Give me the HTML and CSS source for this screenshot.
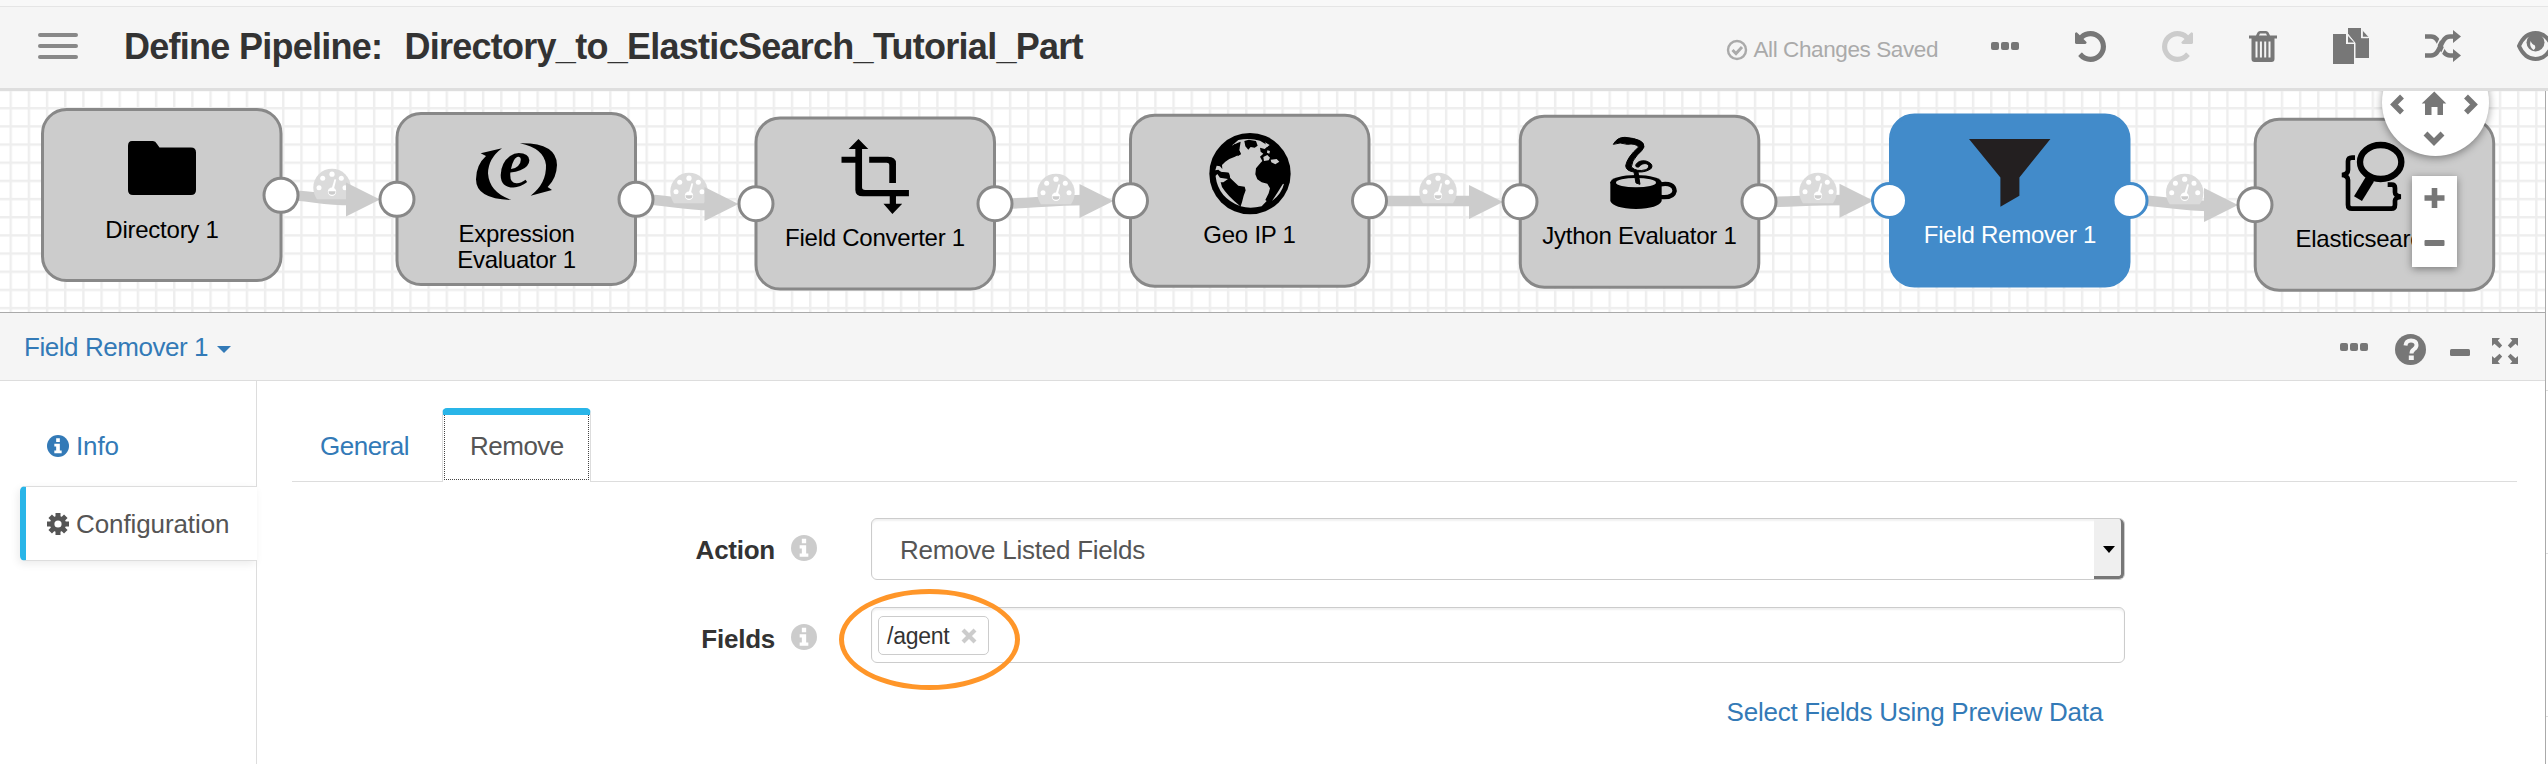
FILE: index.html
```html
<!DOCTYPE html>
<html lang="en">
<head>
<meta charset="utf-8">
<title>Define Pipeline</title>
<link rel="stylesheet" href="styles.css">
</head>
<body>
<svg class="sprite" aria-hidden="true">
  <defs>
    <symbol id="undo" viewBox="128 128 1536 1536"><path d="M1664 896q0 156-61 298t-164 245-245 164-298 61q-172 0-327-72.500t-264-204.500q-7-10-6.500-22.500t8.500-20.500l137-138q10-9 25-9 16 2 23 12 73 95 179 147t225 52q104 0 198.500-40.500t163.500-109.500 109.500-163.500 40.500-198.500-40.500-198.500-109.500-163.500-163.500-109.500-198.500-40.500q-98 0-188 35.500t-160 101.500l137 138q31 30 14 69-17 40-59 40h-448q-26 0-45-19t-19-45v-448q0-42 40-59 39-17 69 14l130 129q107-101 244.500-156.500t284.500-55.500q156 0 298 61t245 164 164 245 61 298z"/></symbol>
    <symbol id="info" viewBox="0 0 24 24"><circle cx="12" cy="12" r="12"/><path class="cut" d="M10 3.500h4v4h-4zM8 9.500h6v7.500h2v3H8v-3h2v-4.500H8z"/></symbol>
    <symbol id="dots" viewBox="0 0 28 8"><rect width="8" height="8" rx="2"/><rect x="10" width="8" height="8" rx="2"/><rect x="20" width="8" height="8" rx="2"/></symbol>
  </defs>
</svg>

<div class="strip"></div>
<header class="topbar">
  <div class="menu"><span></span><span></span><span></span></div>
  <h1 class="title"><span>Define Pipeline:</span><span class="name">Directory_to_ElasticSearch_Tutorial_Part</span></h1>
  <div class="saved">
    <svg width="22" height="22" viewBox="0 0 22 22" fill="none" stroke="#aaa" stroke-width="2.400"><circle cx="11" cy="11" r="9"/><path d="M6.500 11l3.500 3.500 6-6.500" stroke-width="3"/></svg>
    <span>All Changes Saved</span>
  </div>
  <nav class="tools">
    <svg width="28" height="8"><use href="#dots"/></svg>
    <svg width="31" height="31"><use href="#undo"/></svg>
    <svg class="off" width="31" height="31"><use href="#undo"/></svg>
    <svg width="28" height="31" viewBox="0 0 28 31"><path fill-rule="evenodd" d="M0 4.500h7l1.500-3Q9.300 0 11 0h6q1.700 0 2.500 1.500l1.500 3h7v3h-2.500V28q0 3-3 3h-17q-3 0-3-3V7.500H0zM10 4.500h8l-1-2h-6zM6.500 10.500v16h2v-16zM10.900 10.500v16h2v-16zM15.200 10.500v16h2v-16zM19.500 10.500v16h2v-16z"/></svg>
    <svg width="36" height="36" viewBox="0 0 36 36"><path d="M15 0h13v10h8v20H22V16L15 8.500z"/><path d="M29.500 2.500L35.500 9h-6z"/><path class="bg" d="M0 5h14l8 10v21H0z" stroke="#f5f5f5"/><path d="M0 6h13v10h8v20H0z"/><path d="M15 8l6 6.500h-6z"/><path d="M29 3v6.500h6.500" fill="none" stroke="#f5f5f5" stroke-width="1.500"/></svg>
    <svg width="36" height="32" viewBox="0 0 36 32"><path d="M0 6.500h6c5 0 7 4 9.500 9.500S20 25.500 25 25.500h4M0 25.500h6c5 0 7-4 9.500-9.500S20 6.500 25 6.500h4" fill="none" stroke="#777" stroke-width="4.600"/><path d="M28 0l8 6.500-8 6.500zM28 19l8 6.500-8 6.500z"/><path d="M11 17l4-8M16.500 23.500l4-8" stroke="#f5f5f5" stroke-width="1.500" fill="none"/></svg>
    <svg width="37" height="30" viewBox="0 0 37 30"><path d="M2 15C6 6 12 2 18.500 2S31 6 35 15C31 24 25 28 18.500 28S6 24 2 15z" fill="none" stroke="#777" stroke-width="4"/><circle cx="18.500" cy="11.500" r="9"/><path d="M13.500 10q-1.500 6 3 9 3-2 1-5-2 0-4-4z" fill="#f5f5f5"/></svg>
  </nav>
</header>

<section class="canvas">
<svg class="diagram" width="2545" height="221" viewBox="0 91 2545 221">
  <defs>
    <pattern id="grid" x="9.500" y="107" width="18.170" height="18.170" patternUnits="userSpaceOnUse"><path d="M0 1.200H18.200M1.200 0V18.200" stroke="#eee" stroke-width="2.400"/></pattern>
    <g id="box"><rect x="1.500" y="1.500" width="238.500" height="171" rx="24"/></g>
    <g id="gauge"><path d="M-15 30.500Q-18.700 25-18.700 18.700A18.700 18.700 0 0 1 18.700 18.700Q18.700 25 15 30.500z" fill="#dbdbdb"/><g fill="#fff"><circle cx="-13" cy="19" r="2.500"/><circle cx="13" cy="19" r="2.500"/><circle cx="-9.300" cy="9.500" r="2.500"/><circle cx="9.300" cy="9.500" r="2.500"/><circle cy="5.500" r="2.600"/><circle cy="23" r="4.200"/><path d="M2.500 10.500l1.700.4L1.500 22h-2.500z"/></g><path d="M-3.500 22.500h7a3.500 3.500 0 0 1-7 0z" fill="#ccc"/></g>
    <path id="head" d="M-34-17L0 0-34 17z" fill="#ccc"/>
  </defs>
  <rect y="91" width="2545" height="221" fill="url(#grid)"/>

  <g class="edges">
    <path d="M281 195C310 195 320 200 350 200"/>
    <path d="M636 199C665 199 680 205 710 205"/>
    <path d="M995 204C1025 204 1050 200 1085 200"/>
    <path d="M1369 201H1475"/>
    <path d="M1759 202C1790 202 1810 200 1845 200"/>
    <path d="M2130 200C2160 200 2180 206 2210 206"/>
  </g>
  <use href="#gauge" x="332" y="168.700"/><use href="#head" x="380" y="199.500"/>
  <use href="#gauge" x="689" y="172.700"/><use href="#head" x="738.500" y="204"/>
  <use href="#gauge" x="1056" y="173.700"/><use href="#head" x="1113.500" y="201"/>
  <use href="#gauge" x="1438" y="172.700"/><use href="#head" x="1503" y="202"/>
  <use href="#gauge" x="1818" y="172.700"/><use href="#head" x="1873.500" y="200.800"/>
  <use href="#gauge" x="2184.700" y="173.700"/><use href="#head" x="2238" y="205"/>

  <g class="boxes">
    <use href="#box" x="41" y="108"/><use href="#box" x="395.500" y="112"/><use href="#box" x="754.500" y="116.500"/>
    <use href="#box" x="1129" y="113.700"/><use href="#box" x="1518.800" y="114.700"/><use href="#box" x="2253.700" y="117.700"/>
    <use class="picked" href="#box" x="1889" y="113.500"/>
  </g>
  <g class="ports">
    <circle cx="281" cy="195.300" r="17"/><circle cx="397" cy="199.300" r="17"/><circle cx="636" cy="199.300" r="17"/>
    <circle cx="756" cy="203.700" r="17"/><circle cx="995" cy="203.700" r="17"/><circle cx="1130.500" cy="200.800" r="17"/>
    <circle cx="1369.500" cy="200.800" r="17"/><circle cx="1520" cy="201.700" r="17"/><circle cx="1759" cy="201.700" r="17"/>
    <circle cx="2255" cy="204.700" r="17"/>
    <circle class="picked" cx="1889.500" cy="200.500" r="17"/><circle class="picked" cx="2130" cy="200.500" r="17"/>
  </g>

  <path d="M132 141h21q2.500 0 4 3l2.500 3.500H191q5 0 5 5V190q0 5-5 5h-58q-5 0-5-5v-44q0-5 4-5z"/>

  <g transform="translate(460 130) scale(.3333)">
    <path d="M62 70L126 55Q85 85 84 130Q88 188 155 210Q48 208 48 148Q48 105 78 78z"/>
    <path d="M180 40Q290 38 291 105Q290 145 263 171L276 180 212 197Q260 160 258 105Q252 55 180 40z"/>
    <text class="logo-e" x="117" y="170">e</text>
  </g>

  <g transform="translate(700 80) scale(.4464 .3333)"><path d="M355 177L377 207H363V322Q363 330 370 330H468V349H365Q348 349 348 330V207H333zM317 230h31v18h-31zM379 230H421Q439 230 439 250V309H424V254Q424 248 418 248H379zM425 349H439V371H453L431 402 411 371H425z"/></g>

  <g transform="translate(1200 125) scale(.3333)">
    <circle cx="150" cy="146" r="122"/>
    <path fill="#ccc" d="M95 62L112 54 122 50 118 75 122 86 105 95 88 102 76 110 66 120 67 132 60 124 50 122 46 136 55 134 64 142 86 143 90 158 100 168 115 182 134 185 137 196 131 212 126 232 122 244Q150 252 185 244L200 228 196 225 206 205 210 190 202 176 185 172 172 163 166 148 168 130 182 113 187 108 180 95 190 86 182 80 180 68 194 72 205 62 180 47Q150 38 115 45z"/>
    <path d="M133 48L146 44 168 48 173 62 164 68 152 66 145 74 136 64zM104 56l10 4 4 12-12 5-8-8zM110 80l9-2 4 10-10 6z"/>
    <path fill="#ccc" d="M190 96l12-6 8 8-4 8-14 2zM212 104l18-2 8 8-12 8-12-6zM202 76l8 2-2 8-7-3zM47 152L52 147 60 158 84 162 70 172 62 172 66 186Q82 212 120 243Q55 218 47 155zM252 176Q246 205 216 228 235 200 248 178zM195 52l14 8-8 6z"/>
    <path d="M56 141l30 4 3 13-22-2z" fill="none" stroke="#000" stroke-width="3"/>
  </g>

  <g transform="translate(1590 125) scale(.3333)">
    <ellipse cx="138" cy="172" rx="77" ry="22"/>
    <path d="M61 172V228Q70 250 138 252Q206 250 215 228V172z"/>
    <ellipse cx="138" cy="173" rx="60" ry="14" fill="#ccc"/>
    <path d="M212 178Q252 172 254 198Q250 220 212 216" fill="none" stroke="#000" stroke-width="13"/>
    <path stroke="#000" stroke-width="3" d="M70 58Q82 36 105 37Q165 42 162 66Q158 76 142 90Q125 108 124 126Q140 142 168 134Q182 126 172 117Q158 112 146 126Q136 128 137 120Q146 104 168 108Q192 116 184 130Q170 142 144 141L150 178 138 174 132 141Q108 138 107 122Q112 96 146 66Q136 54 112 58Q90 50 70 58z"/>
  </g>

  <path d="M1969 139h81.400l-31 38.500v18.200l-19 11v-29.200z" fill="#231f20"/>

  <g transform="translate(2330 85) scale(.3333)" fill="none" stroke="#000">
    <path d="M75 218H66Q54 218 54 229V255Q54 268 36 270Q54 272 54 285V359Q54 371 66 371H184Q195 371 195 359V347Q196 338 212 335Q195 332 195 322V309Q195 299 185 299H173" stroke-width="14"/>
    <ellipse cx="152" cy="231" rx="62" ry="51" stroke-width="19"/>
    <path d="M120 282L84 341" stroke-width="28"/>
  </g>

  <g class="labels">
    <text x="162" y="237.700">Directory 1</text>
    <text x="516.500" y="242">Expression</text><text x="516.500" y="267.700">Evaluator 1</text>
    <text x="875" y="246">Field Converter 1</text>
    <text x="1249.500" y="243">Geo IP 1</text>
    <text x="1639.500" y="244.300">Jython Evaluator 1</text>
    <text class="on" x="2010" y="243">Field Remover 1</text>
    <text x="2375" y="247.300">Elasticsearch 1</text>
  </g>
</svg>
<div class="pan">
  <svg width="107" height="66" viewBox="2382 91 107 66"><g fill="none" stroke="#777" stroke-width="5.500"><path d="M2402 96.500l-8 8 8 8M2466 96.500l8 8-8 8M2425.500 133.500l8.500 8.500 8.500-8.500"/></g><path d="M2434.300 91.500l12 12h-3.300V115h-5.500v-8h-6v8h-6.500v-11.500h-3.300z"/></svg>
</div>
<div class="zoom">
  <svg width="45" height="91"><path d="M19.700 12h5.600v7.200h7.200v5.600h-7.200V32h-5.600v-7.200h-7.200v-5.600h7.200z"/><rect x="12.500" y="64" width="20" height="6" rx="1"/></svg>
</div>
</section>

<section class="panel">
  <div class="panel-head">
    <div class="picker">Field Remover 1<i class="caret"></i></div>
    <div class="actions">
      <svg width="28" height="8"><use href="#dots"/></svg>
      <svg class="q" width="31" height="31" viewBox="0 0 31 31"><circle cx="15.500" cy="15.500" r="15.500"/><path d="M10.500 11.500q.5-5 5.500-5 5.500 0 5.500 4.500 0 2.500-2.500 4.200-2.500 1.600-2.500 4.300" fill="none" stroke="#f5f5f5" stroke-width="4"/><path d="M13.800 21.500h5v4.500h-5z" fill="#f5f5f5"/></svg>
      <svg class="m" width="20" height="7"><rect width="20" height="7" rx="1.500"/></svg>
      <svg class="x" width="26" height="26" viewBox="0 0 26 26"><path d="M0 0h8L5.800 2.500l4.400 5-2.700 2.700-5-4.400L0 8zM26 0v8l-2.500-2.200-5 4.400-2.700-2.700 4.400-5L18 0zM0 26v-8l2.500 2.200 5-4.400 2.700 2.700-4.400 5L8 26zM26 26h-8l2.200-2.500-4.400-5 2.700-2.700 5 4.400L26 18z"/></svg>
    </div>
  </div>
  <div class="panel-body">
    <aside class="side">
      <div class="side-item link"><svg width="22" height="22"><use href="#info"/></svg>Info</div>
      <div class="side-item current"><svg width="22" height="22" viewBox="0 0 22 22"><g stroke="#555" stroke-width="5"><path d="M11 0v22M0 11h22M3.200 3.200l15.600 15.600M18.800 3.200L3.200 18.800"/></g><circle cx="11" cy="11" r="8"/><circle cx="11" cy="11" r="3.600" fill="#fff"/></svg>Configuration</div>
      <div class="side-rest"></div>
    </aside>
    <main class="content">
      <div class="tabs"><div class="tab first link">General</div><div class="tab active"><span>Remove</span></div></div>
      <div class="form">
        <div class="label">Action</div><svg class="hint" width="26" height="26"><use href="#info"/></svg>
        <div class="field select"><span>Remove Listed Fields</span><div class="drop"><i></i></div></div>
        <div class="label">Fields</div><svg class="hint" width="26" height="26"><use href="#info"/></svg>
        <div class="field tags">
          <div class="tag">/agent<svg width="16" height="16" viewBox="0 0 16 16"><path d="M2 2l12 12M14 2L2 14" stroke="#ccc" stroke-width="4.200"/></svg></div>
          <div class="ring"></div>
        </div>
        <div class="preview link">Select Fields Using Preview Data</div>
      </div>
    </main>
  </div>
</section>
<div class="edge"><i></i><i></i><i></i></div>
</body>
</html>
```
FILE: styles.css
```css
* { box-sizing: border-box; }
body {
  margin: 0;
  width: 2548px;
  height: 764px;
  overflow: hidden;
  position: relative;
  display: flex;
  flex-direction: column;
  background: #fff;
  color: #333;
  font: 26px/36px "Liberation Sans", Arial, sans-serif;
  letter-spacing: -.25px;
}
svg { display: block; flex: none; }
.sprite { position: absolute; width: 0; height: 0; }
.link { color: #337ab7; }

.strip { height: 7px; background: #f8f8f8; border-bottom: 1px solid #e5e5e5; }
.topbar {
  height: 84px;
  display: flex;
  align-items: center;
  padding: 0 0 0 38px;
  background: #f5f5f5;
  border-bottom: 3px solid #dedede;
  overflow: hidden;
}
.menu { display: flex; flex-direction: column; gap: 7px; width: 40px; padding-bottom: 3px; }
.menu span { height: 4px; border-radius: 2px; background: #888; }
.title {
  display: flex;
  gap: 22px;
  margin: 0 0 0 46px;
  padding-bottom: 2px;
  font-size: 36px;
  line-height: 44px;
  white-space: nowrap;
  letter-spacing: -.73px;
}
.saved {
  display: flex;
  align-items: center;
  gap: 5px;
  margin-left: auto;
  padding-top: 4px;
  font-size: 22.500px;
  color: #aaa;
  white-space: nowrap;
  letter-spacing: -.4px;
}
.tools { display: flex; align-items: center; gap: 56px; margin: 0 -6px 3px 53px; fill: #777; }
.tools .off { fill: #ccc; transform: scaleX(-1); }
.tools .bg { fill: #f5f5f5; }

.canvas { position: relative; height: 222px; border-bottom: 1px solid #aaa; overflow: hidden; flex: none; }
.edges path { fill: none; stroke: #ccc; stroke-width: 10.500; }
.boxes { fill: #ccc; stroke: #888; stroke-width: 3; }
.boxes .picked { fill: #428bca; stroke: #428bca; }
.ports { fill: #fff; stroke: #888; stroke-width: 3; }
.ports .picked { stroke: #428bca; }
.labels { font-size: 24px; text-anchor: middle; fill: #000; }
.labels .on { fill: #fff; }
.logo-e { font: italic bold 216px "Liberation Serif", serif; letter-spacing: 0; }
.pan {
  position: absolute;
  left: 2382px;
  top: -42px;
  width: 107px;
  height: 107px;
  padding-top: 42px;
  border-radius: 50%;
  background: #fff;
  box-shadow: 0 2px 8px rgba(0, 0, 0, .4);
  fill: #777;
}
.zoom { position: absolute; left: 2412px; top: 85px; width: 45px; height: 91px; background: #fff; box-shadow: 0 2px 8px rgba(0, 0, 0, .4); fill: #777; }

.panel { flex: 1; display: flex; flex-direction: column; width: 2545px; }
.panel-head {
  height: 68px;
  display: flex;
  justify-content: space-between;
  padding: 16px 27px 0 24px;
  background: #f5f5f5;
  border-bottom: 1px solid #ddd;
}
.picker { display: flex; color: #337ab7; letter-spacing: -.45px; }
.caret { margin: 17px 0 0 9px; width: 0; height: 0; border: 7px solid transparent; border-top-color: #337ab7; border-bottom: 0; }
.actions { display: flex; fill: #777; padding-top: 14px; }
.actions .q { margin: -9px 0 0 27px; }
.actions .m { margin: 6px 0 0 24px; }
.actions .x { margin: -5px 0 0 22px; }
.panel-body { flex: 1; display: flex; }

.side { width: 257px; display: flex; flex-direction: column; padding-left: 20px; }
.side-item { display: flex; align-items: center; gap: 7px; padding-left: 27px; fill: currentColor; letter-spacing: -.1px; }
.side-item:first-child { height: 105px; padding-top: 25px; padding-bottom: 0; border-right: 1px solid #ddd; }
.cut { fill: #fff; }
.current {
  height: 75px;
  padding-left: 21px;
  color: #555;
  border: 1px solid #ddd;
  border-left: 6px solid #29b5e8;
  border-right: 0;
  border-radius: 5px 0 0 5px;
  box-shadow: -2px 3px 8px rgba(0, 0, 0, .08);
}
.side-rest { flex: 1; border-right: 1px solid #ddd; }

.content { flex: 1; padding: 27px 28px 0 35px; }
.tabs { display: flex; height: 74px; border-bottom: 1px solid #ddd; }
.tab { padding: 20px 0 0 28px; letter-spacing: -.5px; }
.first { width: 150px; }
.active {
  width: 149px;
  height: 74px;
  padding: 0 1px;
  color: #555;
  background: #fff;
  border: 1px solid #ddd;
  border-top: 7px solid #29b5e8;
  border-bottom: 0;
  border-radius: 5px 5px 0 0;
}
.active span { display: block; height: 65px; padding: 13px 0 0 25px; border: 1px dotted #444; border-top: 0; }
.form {
  display: grid;
  grid-template-columns: 483px 26px 1254px;
  grid-template-rows: 62px 56px 52px;
  column-gap: 16px;
  row-gap: 27px;
  padding-top: 36px;
}
.label { text-align: right; font-weight: bold; padding-top: 14px; }
.hint { margin-top: 17px; fill: #ccc; }
.field { position: relative; margin-left: 38px; border: 1px solid #ccc; border-radius: 6px; box-shadow: inset 0 2px 2px rgba(0, 0, 0, .06); width: 1254px; }
.select { display: flex; justify-content: space-between; padding-left: 28px; }
.select span { padding-top: 13px; color: #555; }
.drop { width: 30px; padding: 27px 0 0 9px; background: #efefef; border: solid #777; border-width: 0 3px 3px 0; border-radius: 0 5px 5px 0; }
.drop i { display: block; width: 12px; border: 6px solid transparent; border-top: 7px solid #000; border-bottom: 0; }
.tags { padding: 8px 0 0 6px; }
.tag { display: flex; align-items: center; gap: 12px; width: 111px; height: 39px; padding-left: 8px; border: 1px solid #ccc; border-radius: 5px; font-size: 23px; }
.ring { position: absolute; left: -33px; top: -19px; width: 181px; height: 101px; border: 5px solid #ff9629; border-radius: 50%; }
.preview { grid-column: 3; justify-self: end; margin-right: -16px; padding-top: 4px; white-space: nowrap; }

.edge { position: absolute; left: 2545px; top: 91px; width: 3px; height: 673px; border-left: 1px solid #aaa; display: flex; flex-direction: column; padding-top: 299px; gap: 162px; background: #fff; }
.edge i { height: 1px; background: #ddd; }
```
